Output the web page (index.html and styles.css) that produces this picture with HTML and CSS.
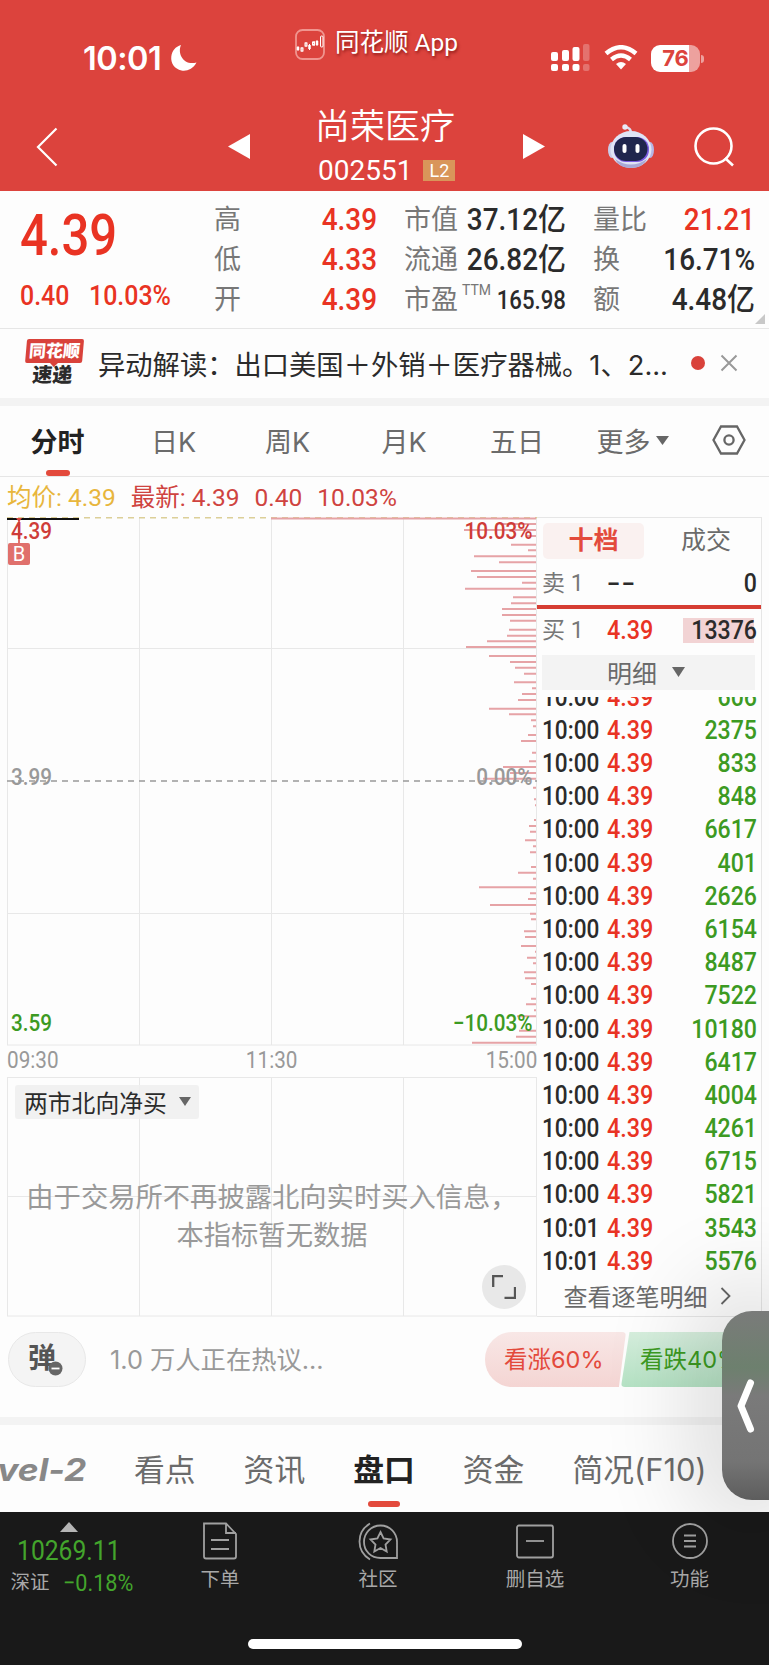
FILE: index.html
```html
<!DOCTYPE html>
<html lang="zh-CN">
<head>
  <meta charset="UTF-8">
  <meta name="viewport" content="width=device-width, initial-scale=1.0">
  <title>尚荣医疗 002551</title>
  <link rel="stylesheet" href="styles.css">
</head>
<body>
<header class="header">
  <div class="status">
    <div class="clock">10:01
      <svg width="28" height="28" viewBox="0 0 28 28"><path d="M11 1C7 10 14 22 26.500 18.500C23 25 17 27.500 11.500 26.500C4.500 25 .5 19 1.300 12.500C2 7 5.500 2.500 11 1Z" fill="#fff"/></svg>
    </div>
    <div class="app-name">
      <svg width="30" height="31" viewBox="0 0 30 31" fill="none" stroke="#fff">
        <rect x="1" y="1" width="28" height="29" rx="6.500" stroke="#f0958f" stroke-width="1.800"/>
        <path d="M3 17v5M7 18v5M11 13v5M14.500 15v6M19 12v5M22 11v6" stroke-width="1"/>
        <path d="M3 18v3M14.500 16v4M22 12v4" stroke-width="2.500"/>
        <rect x="6" y="19" width="2" height="3"/><rect x="10" y="14" width="2" height="3"/><rect x="17.500" y="13" width="2" height="3"/>
        <rect x="25.500" y="7" width="2.500" height="11" rx="1"/>
      </svg>
      <span>同花顺 App</span>
    </div>
    <div class="system">
      <svg width="40" height="28" viewBox="0 0 40 28" fill="#fff">
        <rect x="0" y="8" width="7" height="9" rx="2"/><rect x="11" y="6" width="7" height="11" rx="2"/><rect x="21.500" y="3" width="7" height="14" rx="2"/>
        <rect x="0" y="20" width="7" height="7" rx="2"/><rect x="11" y="20" width="7" height="7" rx="2"/><rect x="21.500" y="20" width="7" height="7" rx="2"/>
        <g opacity=".25"><rect x="32" y="0" width="6.500" height="17" rx="2"/><rect x="32" y="20" width="6.500" height="7" rx="2"/></g>
      </svg>
      <svg width="34" height="26" viewBox="0 0 34 26" fill="none" stroke="#fff" stroke-width="4.500">
        <path d="M2 8.500Q17-4 32 8.500M7.500 14.500Q17 6.500 26.500 14.500"/><path d="M12 19Q17 15 22 19L17 24.500Z" fill="#fff" stroke="none"/>
      </svg>
      <div class="battery">76</div>
    </div>
  </div>
  <div class="nav">
    <svg class="nav-back" width="22" height="40" viewBox="0 0 22 40" fill="none" stroke="#fff" stroke-width="2.200"><path d="M20.500 1.500L2 20L20.500 38.500"/></svg>
    <svg class="nav-prev" width="22" height="26" viewBox="0 0 22 26" fill="#fff"><path d="M22 0V25L0 12.500Z"/></svg>
    <div class="stock">
      <h1>尚荣医疗</h1>
      <div class="code">002551 <span>L2</span></div>
    </div>
    <svg class="nav-next" width="22" height="26" viewBox="0 0 22 26" fill="#fff"><path d="M0 0V25L22 12.500Z"/></svg>
    <svg class="nav-bot" width="48" height="45" viewBox="0 0 48 45">
      <path d="M24 9Q24 4 18.500 3" fill="none" stroke="#dedff0" stroke-width="2.500"/><circle cx="18" cy="3" r="2.700" fill="#e9eaf7"/>
      <ellipse cx="5" cy="26" rx="4" ry="8" fill="#c9cbe8"/><ellipse cx="43" cy="26" rx="4" ry="8" fill="#b6b5e4"/>
      <ellipse cx="24" cy="25.500" rx="20.500" ry="18.500" fill="#dfe4f5"/>
      <path d="M8 35Q24 46 40 35Q36 44 24 44Q12 44 8 35" fill="#a9a9d6"/>
      <rect x="7" y="13" width="35" height="25" rx="12" fill="#7a5be0"/><rect x="7" y="13" width="33.500" height="24" rx="12" fill="#20264d"/>
      <rect x="15.500" y="20" width="4" height="9" rx="2" fill="#fff"/><rect x="28.500" y="20" width="4" height="9" rx="2" fill="#fff"/>
    </svg>
    <svg class="nav-search" width="41" height="41" viewBox="0 0 41 41" fill="none" stroke="#fff" stroke-width="2.600"><ellipse cx="19.500" cy="19" rx="18" ry="17.500"/><path d="M31 31L39 38.500"/></svg>
  </div>
</header>

<section class="quote">
  <div class="price">
    <div class="price-now">4.39</div>
    <div class="price-diff"><span>0.40</span><span>10.03%</span></div>
  </div>
  <dl class="facts facts-red">
    <dt>高</dt><dd>4.39</dd>
    <dt>低</dt><dd>4.33</dd>
    <dt>开</dt><dd>4.39</dd>
  </dl>
  <dl class="facts">
    <dt>市值</dt><dd>37.12亿</dd>
    <dt>流通</dt><dd>26.82亿</dd>
    <dt>市盈<sup>TTM</sup></dt><dd class="small">165.98</dd>
  </dl>
  <dl class="facts">
    <dt>量比</dt><dd class="up">21.21</dd>
    <dt>换</dt><dd>16.71%</dd>
    <dt>额</dt><dd>4.48亿</dd>
  </dl>
</section>

<section class="news">
  <div class="news-logo"><b>同花顺</b><i>速递</i></div>
  <p>异动解读：出口美国＋外销＋医疗器械。1、2...</p>
  <span class="dot"></span>
  <svg width="18" height="18" viewBox="0 0 18 18" stroke="#999" stroke-width="2"><path d="M1.500 1.500L16.500 16.500M16.500 1.500L1.500 16.500"/></svg>
</section>

<nav class="periods">
  <a class="active">分时</a><a>日K</a><a>周K</a><a>月K</a><a>五日</a>
  <a>更多<svg width="13" height="9" viewBox="0 0 13 9" fill="#666"><path d="M0 0H13L6.500 9Z"/></svg></a>
  <a><svg width="34" height="30" viewBox="0 0 34 30" fill="none" stroke="#666" stroke-width="2.300"><path d="M9 1.500H25L32.500 15L25 28.500H9L1.500 15Z"/><circle cx="17" cy="15" r="4.600"/></svg></a>
</nav>

<div class="legend">
  <span class="avg">均价: 4.39</span><span>最新: 4.39</span><span>0.40</span><span>10.03%</span>
</div>

<main class="board">
  <div class="charts">
    <div class="chart">
      <svg width="530" height="529" viewBox="0 0 530 529" fill="none">
        <path class="grid" d="M.5 0V528M132.500 0V528M264.500 0V528M396.500 0V528M529.500 0V528M0 131.500H530M0 396.500H530M0 528H530"/>
        <path d="M0 264H530" stroke="#999" stroke-width="1.500" stroke-dasharray="6 5"/>
        <path d="M0 .7H530" stroke="#dccf98" stroke-width="1.500" stroke-dasharray="6 5"/>
        <path d="M0 2H72" stroke="#111" stroke-width="2.200"/>
        <path id="volume" stroke="#e6a3a6" stroke-width="2"/>
        <path d="M12 2V27" stroke="#d8473f" stroke-width="1.500"/><path d="M9 1H15L12 5Z" fill="#d8473f"/>
      </svg>
      <span class="mark">B</span>
      <div class="scale"><span>4.39</span><span>10.03%</span></div>
      <div class="scale mid"><span>3.99</span><span>0.00%</span></div>
      <div class="scale low"><span>3.59</span><span>−10.03%</span></div>
    </div>
    <div class="times"><span>09:30</span><span>11:30</span><span>15:00</span></div>
    <div class="sub">
      <svg width="530" height="240" viewBox="0 0 530 240" fill="none"><path class="grid" d="M0 .5H530M.5 0V239M132.500 0V239M264.500 0V239M396.500 0V239M529.500 0V239M0 119.500H530M0 239H530"/></svg>
      <div class="picker">两市北向净买<svg width="12" height="9" viewBox="0 0 12 9" fill="#666"><path d="M0 0H12L6 9Z"/></svg></div>
      <p>由于交易所不再披露北向实时买入信息，<br>本指标暂无数据</p>
      <div class="expand"><svg width="24" height="24" viewBox="0 0 24 24" fill="none" stroke="#555" stroke-width="2.300"><path d="M1.200 12V1.200H11M23 12V22.800H12.500"/></svg></div>
    </div>
  </div>

  <aside class="depth">
    <div class="depth-tabs"><span class="active">十档</span><span>成交</span></div>
    <div class="level"><span>卖 1</span><b class="none">--</b><em>0</em></div>
    <div class="divider"></div>
    <div class="level buy"><span>买 1</span><b>4.39</b><em>13376</em></div>
    <div class="detail">明细<svg width="13" height="10" viewBox="0 0 13 10" fill="#666"><path d="M0 0H13L6.500 10Z"/></svg></div>
    <div class="trades" id="trades"></div>
    <div class="more">查看逐笔明细<svg width="11" height="18" viewBox="0 0 11 18" fill="none" stroke="#666" stroke-width="1.800"><path d="M1.500 1L9.500 9L1.500 17"/></svg></div>
  </aside>
</main>

<section class="talk">
  <div class="danmu">弹<svg width="15" height="15" viewBox="0 0 15 15"><circle cx="7.500" cy="7.500" r="7" fill="#666"/><path d="M3.500 7.500H11.500" stroke="#fff" stroke-width="1.800"/></svg></div>
  <p>1.0 万人正在热议...</p>
  <div class="vote"><span class="bull">看涨60%</span><span class="bear">看跌40%</span></div>
</section>

<nav class="sections">
  <a class="level2"><span>Level-2</span></a><a>看点</a><a>资讯</a><a class="active">盘口</a><a>资金</a><a>简况(F10)</a>
</nav>

<footer class="footer">
  <div class="toolbar">
    <div class="index">
      <svg width="18" height="10" viewBox="0 0 18 10" fill="#b5b5b5"><path d="M9 0L18 10H0Z"/></svg>
      <strong>10269.11</strong>
      <div><span>深证</span><em>−0.18%</em></div>
    </div>
    <a><svg width="40" height="40" viewBox="0 0 40 40"><path d="M4 2.500H26L36 13V35.500Q36 37.500 34 37.500H6Q4 37.500 4 35.500ZM26 2.500V12H36M11 19H29M11 28H29"/></svg>下单</a>
    <a><svg width="40" height="40" viewBox="0 0 40 40"><path d="M12 2.500C-2 11 -2 30 12 38.500M22.500 4.500C32 4.500 39 12 39 21V37H22.500C13 37 6 30 6 21C6 12 13 4.500 22.500 4.500ZM22.500 11L25.600 17.500L32.500 18.500L27.500 23.500L28.700 30.500L22.500 27L16.300 30.500L17.500 23.500L12.500 18.500L19.400 17.500Z"/></svg>社区</a>
    <a><svg width="40" height="40" viewBox="0 0 40 40"><rect x="2" y="4.500" width="36" height="32" rx="2"/><path d="M11 20H29"/></svg>删自选</a>
    <a><svg width="40" height="40" viewBox="0 0 40 40"><circle cx="20" cy="20" r="17"/><path d="M14 14.500H26M14 20H26M14 25.500H26"/></svg>功能</a>
  </div>
  <div class="home-bar"></div>
</footer>

<div class="handle"><svg width="18" height="54" viewBox="0 0 18 54" fill="none" stroke="#fff" stroke-width="7" stroke-linecap="round" stroke-linejoin="round"><path d="M13.500 4L4 27L13.500 50"/></svg></div>

<script>
  // [y, length] of every price level, drawn from the right edge
  const volume = [[1.5,265],[7,33],[13,72],[19,9],[27.7,25],[33.3,8],[39.3,62],[45.3,37],[54,65],[60,59],[65.7,14],[71.7,71],
    [80.3,23],[86.3,25],[92,34],[98,34],[103.7,26],[112.7,27],[118.7,29],[124.3,49],[130,70],[139,47],[145,26],[150.7,21],
    [156.7,12],[165.3,22],[171.3,4],[177,14],[183,18],[191.7,47],[197.3,27],[203.3,5],[209.3,3],[218,8],[224,15],[235.7,4],
    [244.3,7],[250,33],[256,26],[261.7,53],[270.7,3],[282.3,2],[288.3,1],[303,2],[309,7],[314.7,6],[323.3,11],[329.3,3],
    [335.3,6],[350,5],[355.7,18],[361.7,3],[370.3,57],[376.3,6],[382,8],[388,46],[396.7,6],[402.3,5],[414.3,12],[420,11],
    [429,15],[434.7,1],[440.7,9],[446.3,3],[455.3,12],[461.3,11],[467,5],[481.7,5],[487.3,10],[493.3,2],[499.3,19],
    [513.7,17],[519.7,20],[525.7,64]];
  document.getElementById('volume').setAttribute('d', volume.map(v => `M${529 - v[1]} ${v[0]}H529`).join(''));

  const lots = [606, 2375, 833, 848, 6617, 401, 2626, 6154, 8487, 7522, 10180, 6417, 4004, 4261, 6715, 5821, 3543, 5576];
  document.getElementById('trades').innerHTML = lots.map((lot, i) =>
    `<div class="trade"><span>${i < 16 ? '10:00' : '10:01'}</span><b>4.39</b><em>${lot}</em></div>`).join('');
</script>
</body>
</html>
```
FILE: styles.css
```css
:root {
  --header: #dc433d;
  --red: #e93323;
  --green: #3c9a22;
  --text: #2b2b2b;
  --muted: #6b6b6b;
  --line: #e6e6e6;
  --cjk: Inter, "Noto Sans CJK SC", sans-serif;
  --num: Roboto, "Noto Sans CJK SC", sans-serif;
}

* {
  box-sizing: border-box;
  margin: 0;
  padding: 0;
}

body {
  position: relative;
  width: 769px;
  height: 1665px;
  overflow: hidden;
  background: #fdfdfd;
  color: var(--text);
  font-family: var(--cjk);
  white-space: nowrap;
}

svg {
  display: block;
  flex: none;
}

em, i {
  font-style: normal;
}

/* header */
.header {
  height: 191px;
  background: var(--header);
  color: #fff;
}

.status {
  display: grid;
  grid-template-columns: 212px 256px 1fr;
  height: 100px;
  padding-left: 83px;
}

.clock {
  display: flex;
  align-items: center;
  gap: 9px;
  height: 40px;
  margin-top: 38px;
  font-size: 32.5px;
  font-weight: 600;
  letter-spacing: -0.5px;
}

.app-name {
  display: flex;
  align-items: center;
  gap: 10px;
  height: 32px;
  margin-top: 28px;
  font-family: var(--num);
  font-size: 24.5px;
  text-shadow: 1px 2px 3px rgba(90, 0, 0, 0.6);
}

.app-name span {
  line-height: 26px;
  margin-top: -2px;
}

.system {
  display: flex;
  align-items: center;
  gap: 13px;
  height: 28px;
  margin-top: 44px;
}

.battery {
  position: relative;
  width: 49px;
  height: 27px;
  border-radius: 9px;
  background: linear-gradient(90deg, #fff 77%, #eda19e 77%);
  color: var(--header);
  font-size: 22px;
  font-weight: 700;
  line-height: 27px;
  text-align: center;
}

.battery::after {
  content: "";
  position: absolute;
  right: -4px;
  top: 10px;
  width: 3px;
  height: 8px;
  border-radius: 0 3px 3px 0;
  background: #eda19e;
}

.nav {
  display: grid;
  grid-template-columns: 192px 29px 266px 84px 87px 1fr;
  padding-left: 36px;
}

.nav-back, .nav-search {
  margin-top: 27px;
}

.nav-prev, .nav-next {
  margin-top: 34px;
}

.nav-bot {
  margin-top: 24px;
}

.stock {
  width: 256px;
  text-align: center;
}

.stock h1 {
  font-size: 35px;
  font-weight: 350;
  line-height: 52px;
}

.code {
  display: flex;
  align-items: center;
  gap: 11px;
  height: 28px;
  margin-top: 4px;
  margin-left: 61px;
  font-family: var(--num);
  font-size: 28px;
}

.code span {
  width: 32px;
  height: 21px;
  background: #d9955a;
  font-size: 18px;
  line-height: 21px;
}

/* quote */
.quote {
  position: relative;
  display: grid;
  grid-template-columns: 167px 163px 162px 162px;
  column-gap: 27px;
  height: 138px;
  padding: 9px 0 0 20px;
  border-bottom: 1px solid var(--line);
  font-family: var(--num);
}

.quote::after {
  content: "";
  position: absolute;
  right: 4px;
  bottom: 4px;
  border: 5px solid #c8c8c8;
  border-top-color: transparent;
  border-left-color: transparent;
}

.price {
  color: var(--red);
}

.price-now {
  margin-top: 8px;
  font-size: 57px;
  font-weight: 500;
  line-height: 56px;
  transform: scaleX(0.86);
  transform-origin: left;
}

.price-diff {
  display: flex;
  gap: 22px;
  margin-top: 15px;
  font-size: 28px;
  font-weight: 500;
  transform: scaleX(0.89);
  transform-origin: left;
}

.facts {
  display: grid;
  grid-template-columns: auto minmax(0, 1fr);
  grid-auto-rows: 40px;
  align-items: center;
}

.facts dt {
  color: #777;
  font-size: 27px;
  line-height: 40px;
}

.facts dt sup {
  font-size: 14px;
  line-height: 0;
  vertical-align: 14px;
  margin-left: 4px;
}

.facts dd {
  display: flex;
  justify-content: flex-end;
  font-size: 31px;
  font-weight: 500;
  line-height: 40px;
  transform: scaleX(0.9);
  transform-origin: right;
}

.facts .small {
  font-size: 25.5px;
  transform: scaleX(0.87);
}

.facts-red dd, .facts .up {
  color: var(--red);
}

/* news */
.news {
  display: flex;
  align-items: center;
  height: 77px;
  padding: 0 23px 2px 25px;
  border-bottom: 8px solid #f3f3f3;
}

.news-logo {
  width: 57px;
  height: 48px;
  margin-right: 16px;
  text-align: center;
  transform: skewX(-5deg);
}

.news-logo b, .news-logo i {
  display: block;
  font-size: 17px;
  font-weight: 900;
  line-height: 24px;
}

.news-logo b {
  position: relative;
  border-radius: 2px;
  background: #d9423b;
  color: #fff;
}

.news-logo b::after {
  content: "";
  position: absolute;
  left: 24px;
  bottom: -4px;
  border: 5px solid transparent;
  border-top-color: #d9423b;
  border-bottom: 0;
}

.news-logo i {
  font-size: 20px;
  line-height: 25px;
}

.news p {
  width: 593px;
  font-size: 27.3px;
}

.dot {
  flex: none;
  width: 14px;
  height: 14px;
  margin-right: 15px;
  border-radius: 50%;
  background: #d9423b;
}

/* period tabs */
.periods {
  display: grid;
  grid-template-columns: 115px 117px 111px 122px 104px 127px 66px;
  height: 71px;
  padding-bottom: 2px;
  border-bottom: 1px solid var(--line);
  color: var(--muted);
  font-size: 27px;
}

.periods a {
  position: relative;
  display: flex;
  align-items: center;
  justify-content: center;
  gap: 5px;
}

.periods .active, .sections .active {
  color: #222;
  font-weight: 700;
}

.periods .active::after, .sections .active::after {
  content: "";
  position: absolute;
  bottom: -2px;
  width: 24px;
  height: 6px;
  border-radius: 3px;
  background: #e34a3c;
}

.legend {
  display: flex;
  gap: 15px;
  height: 40px;
  padding-left: 7px;
  color: #cf4340;
  font-family: var(--num);
  font-size: 24.5px;
  line-height: 41px;
}

.legend .avg {
  color: #e8b63c;
}

/* charts */
.board {
  display: grid;
  grid-template-columns: 530px 225px;
  height: 799px;
  padding-left: 7px;
}

.grid {
  stroke: #e8e8e8;
}

.chart, .sub {
  position: relative;
}

.chart {
  height: 529px;
  font-family: var(--num);
}

.scale {
  position: absolute;
  top: 2px;
  left: 4px;
  right: 4px;
  display: flex;
  justify-content: space-between;
  color: #cf3c38;
  font-size: 23px;
  font-weight: 500;
  line-height: 26px;
}

.scale span, .times span {
  transform: scaleX(0.9);
}

.scale span:first-child, .times span:first-child {
  transform-origin: left;
}

.scale span:last-child, .times span:last-child {
  transform-origin: right;
}

.scale.mid {
  top: 248px;
  color: #999;
}

.scale.low {
  top: 494px;
  color: var(--green);
}

.mark {
  position: absolute;
  top: 26px;
  left: 1px;
  width: 22px;
  height: 22px;
  border-radius: 2px;
  background: #e0706c;
  color: #fff;
  font-size: 20px;
  line-height: 22px;
  text-align: center;
}

.times {
  display: flex;
  justify-content: space-between;
  height: 31px;
  color: #999;
  font-family: var(--num);
  font-size: 23px;
  line-height: 29px;
}

.picker {
  position: absolute;
  top: 8px;
  left: 8px;
  display: flex;
  align-items: center;
  gap: 12px;
  height: 34px;
  padding: 0 8px 2px 9px;
  border-radius: 3px;
  background: rgba(238, 238, 238, 0.85);
  font-size: 23.8px;
}

.sub p {
  position: absolute;
  top: 102px;
  width: 530px;
  color: #999;
  font-size: 27.3px;
  line-height: 38px;
  text-align: center;
}

.expand {
  position: absolute;
  right: 11px;
  bottom: 8px;
  display: grid;
  place-items: center;
  width: 44px;
  height: 44px;
  border-radius: 50%;
  background: #e8e8e8;
}

/* order book */
.depth {
  border: solid var(--line);
  border-width: 1px 1px 1px 0;
  font-family: var(--num);
}

.depth-tabs {
  display: grid;
  grid-template-columns: 101px 124px;
  height: 47px;
  padding: 5px 0 6px 6px;
  color: var(--muted);
  font-size: 25px;
  line-height: 36px;
  text-align: center;
}

.depth-tabs .active {
  border-radius: 5px;
  background: #faf1f0;
  color: #e34a3c;
  font-weight: 700;
}

.level, .trade {
  display: grid;
  grid-template-columns: 65px 60px 1fr;
  padding: 0 4px 0 5px;
  font-size: 26px;
  font-weight: 500;
}

.level {
  height: 40px;
  line-height: 37px;
}

.level span {
  color: #777;
  font-size: 23px;
  font-weight: 400;
}

.level b, .trade b {
  font-weight: 500;
  transform: scaleX(0.9);
  transform-origin: left;
}

.level .none {
  letter-spacing: 1px;
  transform: scaleX(1.5);
}

.level em, .trade em {
  text-align: right;
  transform: scaleX(0.89);
  transform-origin: right;
}

.trade span {
  transform: scaleX(0.87);
  transform-origin: left;
}

.divider {
  height: 4px;
  background: #d63d33;
}

.buy {
  height: 46px;
  line-height: 43px;
  background: linear-gradient(#f2d3d4, #f2d3d4) 146px 9px / 71px 25px no-repeat;
}

.buy b, .trade b {
  color: var(--red);
}

.detail {
  display: flex;
  align-items: center;
  justify-content: center;
  gap: 15px;
  height: 35px;
  margin: 0 6px 7px 5px;
  padding: 0 5px 2px 0;
  background: #f3f3f3;
  color: var(--muted);
  font-size: 25px;
}

.trades {
  display: flex;
  flex-direction: column;
  justify-content: flex-end;
  height: 581px;
  overflow: hidden;
}

.trade {
  flex: none;
  height: 33.2px;
  line-height: 33px;
}

.trade em {
  color: var(--green);
}

.more {
  display: flex;
  align-items: center;
  justify-content: center;
  gap: 12px;
  height: 35px;
  padding-right: 4px;
  color: var(--muted);
  font-size: 24px;
}

/* discussion */
.talk {
  display: flex;
  height: 109px;
  padding: 16px 0 0 8px;
  border-bottom: 8px solid #f3f3f3;
}

.danmu {
  position: relative;
  width: 78px;
  height: 55px;
  border: 1px solid #e8e8e8;
  border-radius: 28px;
  background: #f4f4f4;
  color: #555;
  font-size: 28px;
  font-weight: 700;
  line-height: 50px;
  padding-left: 19px;
}

.danmu svg {
  position: absolute;
  left: 39px;
  top: 28px;
}

.talk p {
  width: 375px;
  margin-left: 24px;
  color: #999;
  font-size: 25.3px;
  line-height: 55px;
}

.vote {
  display: flex;
  height: 55px;
  font-size: 23.5px;
  line-height: 55px;
}

.vote span {
  flex: none;
  width: 141px;
  padding-left: 19px;
}

.bull {
  border-radius: 27px 4px 4px 27px;
  background: linear-gradient(#f8e7e6, #f4d5d3);
  clip-path: polygon(0 0, 100% 0, 95% 100%, 0 100%);
  color: #e34a3c;
}

.bear {
  margin-left: -5px;
  border-radius: 4px 27px 27px 4px;
  background: linear-gradient(#d6eedd, #b5e2c4);
  clip-path: polygon(6% 0, 100% 0, 100% 100%, 0 100%);
  color: var(--green);
}

.sections {
  display: flex;
  height: 87px;
  gap: 48px;
  color: var(--muted);
  font-size: 30.8px;
  line-height: 90px;
}

.sections a {
  position: relative;
}

.sections .level2 {
  display: flex;
  justify-content: flex-end;
  width: 86px;
  color: #888;
  font-size: 31px;
  font-style: italic;
  font-weight: 700;
}

.level2 span {
  transform: scaleX(1.14);
  transform-origin: right;
}

.sections .active::after {
  left: 15px;
  bottom: 5px;
  width: 32px;
}

/* bottom bar */
.footer {
  height: 153px;
  background: #191919;
  color: #a8a8a8;
}

.toolbar {
  display: grid;
  grid-template-columns: 141px 158px 158px 156px 153px;
  height: 127px;
  font-size: 19.5px;
}

.toolbar a {
  display: flex;
  flex-direction: column;
  align-items: center;
  gap: 2px;
  padding-top: 9px;
}

.toolbar a svg {
  fill: none;
  stroke: #a0a0a0;
  stroke-width: 1.8;
}

.index {
  display: flex;
  flex-direction: column;
  align-items: center;
  padding: 10px 3px 0 0;
  font-family: var(--num);
}

.index strong {
  font-size: 28px;
  font-weight: 400;
  line-height: 38px;
  color: #43a52c;
  transform: scaleX(0.88);
}

.index div {
  display: flex;
  gap: 14px;
  margin-left: 6px;
  line-height: 26px;
}

.index em {
  color: #43a52c;
  font-size: 24px;
  transform: scaleX(0.9);
  transform-origin: left;
  margin-right: -8px;
}

.home-bar {
  width: 274px;
  height: 10px;
  margin: 0 auto;
  border-radius: 5px;
  background: #fff;
}

/* floating drawer handle */
.handle {
  position: absolute;
  right: 0;
  top: 1311px;
  display: grid;
  place-items: center;
  width: 47px;
  height: 189px;
  border-radius: 30px 0 0 30px;
  background: linear-gradient(#7a7b7a, #6d806e 30%, #7a7a7a 45%, #747474 80%, #5d5d5d);
  box-shadow: 0 0 90px 30px rgba(0, 0, 0, 0.13);
}
```
